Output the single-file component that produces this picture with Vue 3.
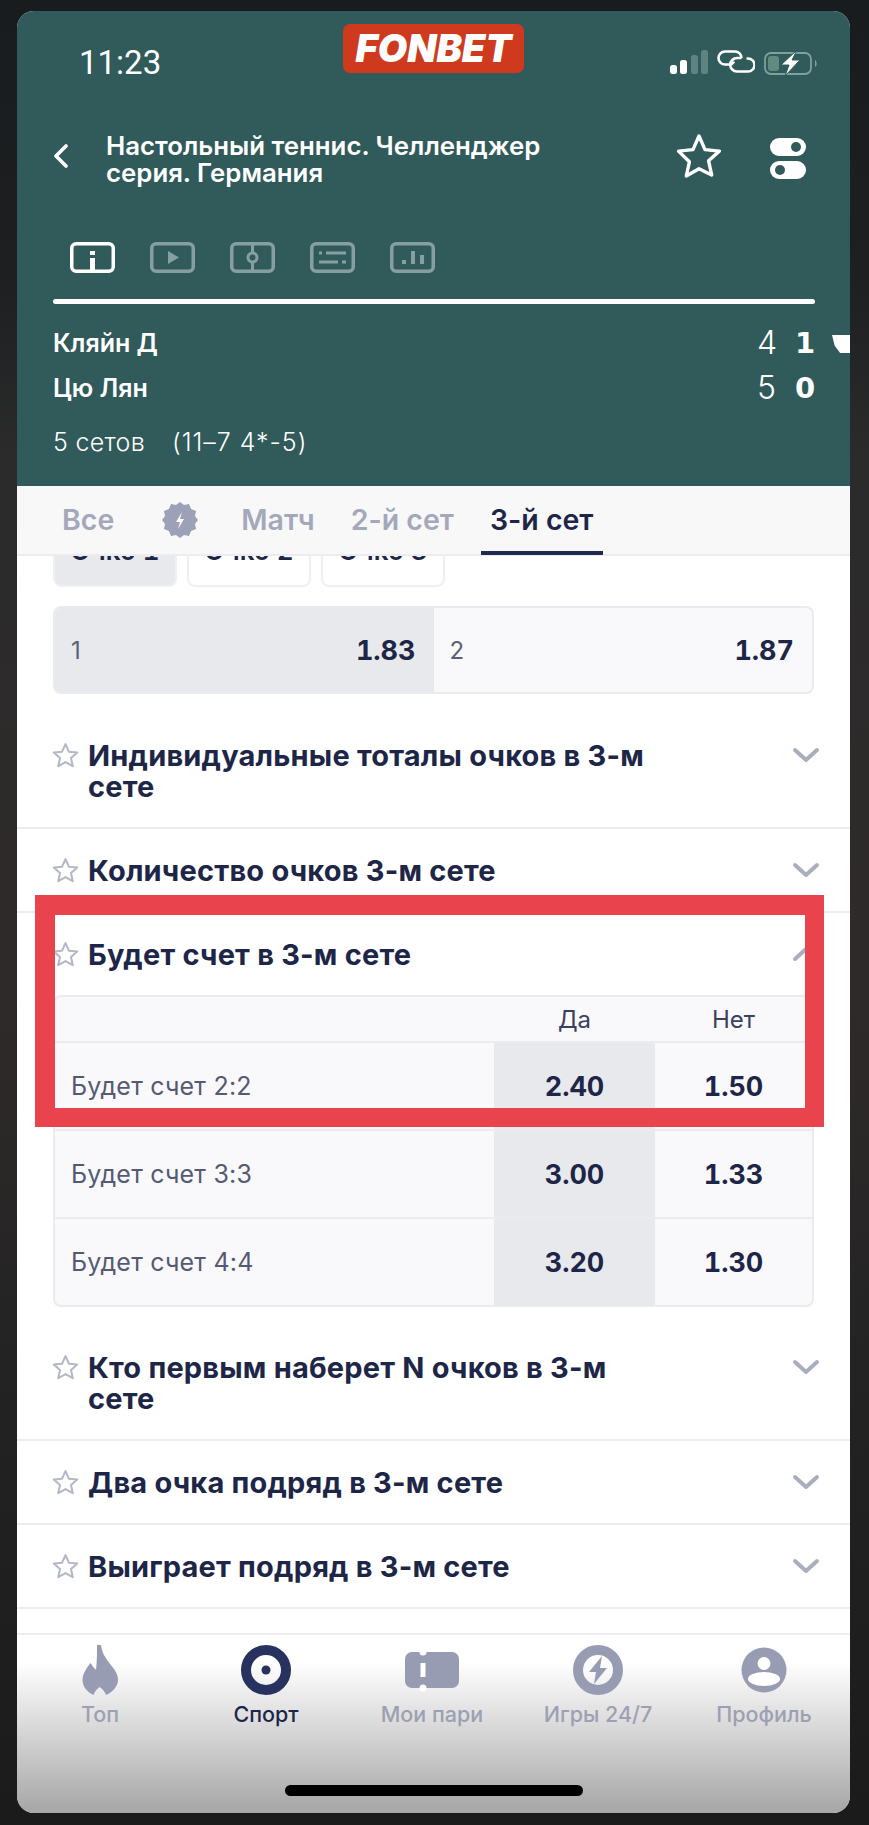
<template>
  <div class="page">
    <div class="phone">
      <header class="hero">
        <div class="status">
          <span class="time">11:23</span>
          <span class="logo">FONBET</span>
          <div class="status-icons">
            <svg width="38" height="24" viewBox="0 0 38 24">
              <rect x="0" y="15" width="7" height="9" rx="2.5" fill="#fff" />
              <rect x="10" y="10" width="7" height="14" rx="2.5" fill="#fff" />
              <rect x="21" y="5" width="7" height="19" rx="2.5" fill="#5f8380" />
              <rect x="31" y="0" width="7" height="24" rx="2.5" fill="#5f8380" />
            </svg>
            <svg width="38" height="23" viewBox="0 0 38 23" fill="none" stroke="#fff" stroke-width="2.6">
              <path d="M14 14.500H8a6.500 6.500 0 0 1 0-13h10a6.500 6.500 0 0 1 6.500 6.500" />
              <path d="M24.500 8H20a6.500 6.500 0 0 0 0 13.500h11a6.500 6.500 0 0 0 0-13h-1.500" />
              <path d="M14 14.500a6.500 6.500 0 0 0 3-3" />
            </svg>
            <svg width="54" height="26" viewBox="0 0 54 26">
              <rect x="1" y="3" width="46" height="21" rx="6" fill="none" stroke="#7fa09d" stroke-width="1.8" />
              <rect x="4" y="6" width="11" height="15" rx="3" fill="#638a80" />
              <path d="M51 10c2 1 2.500 6 0 7z" fill="#7fa09d" />
              <path d="M33 0 17 15h8l-4 11 15-16h-8z" fill="#fff" stroke="#315a5a" stroke-width="1" />
            </svg>
          </div>
        </div>

        <div class="title-row">
          <svg class="back" width="16" height="24" viewBox="0 0 16 24" fill="none" stroke="#fff" stroke-width="3.600" stroke-linecap="round" stroke-linejoin="round">
            <path d="M13 2 3 12l10 10" />
          </svg>
          <h1 class="title">Настольный теннис. Челленджер серия. Германия</h1>
          <svg class="fav" width="46" height="46" viewBox="0 0 46 46" fill="none" stroke="#fff" stroke-width="3.400" stroke-linejoin="round">
            <path d="M23 3l6 13.600 14.500 1.500-10.900 9.700 3.100 14.200L23 35.700 10.300 43l3.100-14.200L2.500 18.100 17 16.600z" />
          </svg>
          <svg class="toggles" width="36" height="41" viewBox="0 0 36 41">
            <rect x="0" y="0" width="36" height="18" rx="9" fill="#fff" />
            <circle cx="26" cy="9" r="5" fill="#315a5a" />
            <rect x="0" y="23" width="36" height="18" rx="9" fill="#fff" />
            <circle cx="10" cy="32" r="5" fill="#315a5a" />
          </svg>
        </div>

        <div class="views">
          <svg v-for="(v, i) in views" :key="v" class="view" :class="{ on: i === 0 }" width="45" height="31" viewBox="0 0 45 31" fill="none" stroke="currentColor" stroke-width="3.500">
            <rect x="1.750" y="1.750" width="41.500" height="27.500" rx="4.500" />
            <template v-if="v === 'info'">
              <rect x="20" y="9" width="5" height="4" fill="currentColor" stroke="none" />
              <rect x="20" y="16" width="5" height="13" fill="currentColor" stroke="none" />
            </template>
            <path v-if="v === 'play'" d="M18 9l11 6.500-11 6.500z" fill="currentColor" stroke="none" />
            <template v-if="v === 'field'">
              <path d="M22.500 2v8M22.500 21v8" stroke-width="3" />
              <circle cx="22.500" cy="15.500" r="4.500" stroke-width="3" />
            </template>
            <template v-if="v === 'score'">
              <path d="M9 11h3M16 11h20M9 20h19M32 20h4" stroke-width="3" />
            </template>
            <template v-if="v === 'stats'">
              <rect x="12" y="18" width="4" height="4" fill="currentColor" stroke="none" />
              <rect x="21" y="9" width="4" height="13" fill="currentColor" stroke="none" />
              <rect x="30" y="13" width="4" height="9" fill="currentColor" stroke="none" />
            </template>
          </svg>
        </div>
        <div class="progress"></div>

        <div class="players">
          <div class="player" v-for="p in players" :key="p.name">
            <span class="pname">{{ p.name }}</span>
            <span class="games">{{ p.games }}</span>
            <span class="sets">{{ p.sets }}</span>
          </div>
        </div>
        <span class="serve"></span>
        <div class="meta"><span>5 сетов</span><span class="sets-score">(11–7 4*-5)</span></div>
      </header>

      <nav class="tabs">
        <span class="tab all">Все</span>
        <svg class="bolt" width="36" height="36" viewBox="0 0 36 36">
          <path d="M18 0l4 3 5-1 2 5 5 2-1 5 3 4-3 4 1 5-5 2-2 5-5-1-4 3-4-3-5 1-2-5-5-2 1-5-3-4 3-4-1-5 5-2 2-5 5 1z" fill="#9ca1b7" />
          <path d="M20 10l-6 10h4l-2 7 6-10h-4z" fill="#fff" />
        </svg>
        <span class="tab">Матч</span>
        <span class="tab">2-й сет</span>
        <span class="tab active">3-й сет</span>
      </nav>

      <main class="content">
        <div class="chips">
          <span class="chip sel">Очко 1</span>
          <span class="chip">Очко 2</span>
          <span class="chip">Очко 3</span>
        </div>

        <div class="winner">
          <div class="cell sel"><span>1</span><b>1.83</b></div>
          <div class="cell"><span>2</span><b>1.87</b></div>
        </div>

        <section v-for="m in markets" :key="m.title" class="market" :class="{ open: m.rows }">
          <div class="m-head">
            <svg class="m-star" width="27" height="27" viewBox="0 0 26 26" fill="#fff" stroke="#b4b8c6" stroke-width="2" stroke-linejoin="round">
              <path d="M13 2l3.300 7.300 8 .9-6 5.300 1.700 7.800L13 19.300l-7 4 1.700-7.800-6-5.300 8-.9z" />
            </svg>
            <h2 class="m-title">{{ m.title }}</h2>
            <svg class="m-chev" width="28" height="16" viewBox="0 0 28 16" fill="none" stroke="#a9aebd" stroke-width="4" stroke-linecap="round" stroke-linejoin="round">
              <path :d="m.rows ? 'M3 13 14 3l11 10' : 'M3 3l11 10L25 3'" />
            </svg>
          </div>
          <div v-if="m.rows" class="table">
            <div class="t-row t-top">
              <span class="t-name"></span>
              <span class="t-col yes-w">Да</span>
              <span class="t-col">Нет</span>
            </div>
            <div v-for="r in m.rows" :key="r.name" class="t-row">
              <span class="t-name">{{ r.name }}</span>
              <b class="t-col yes-w yes">{{ r.yes }}</b>
              <b class="t-col">{{ r.no }}</b>
            </div>
          </div>
        </section>

        <div class="highlight"></div>
      </main>

      <footer class="bottom">
        <div class="nav-item">
          <svg width="36" height="50" viewBox="0 0 36 50" fill="#979cb3">
            <path d="M15 0h4c1 8 4 12 9 19 5 6 8 10 8 16 0 6-5 12-12 15-1-3-3-6-6.500-8-3 2-5 5-6 8-6-3-11-8-11-15 0-6 4-12 8-17 2 3 3.500 5 5.500 7 1-9 1-16 1-25z" />
          </svg>
          <span>Топ</span>
        </div>
        <div class="nav-item active">
          <svg width="50" height="50" viewBox="0 0 50 50">
            <circle cx="25" cy="25" r="20" fill="none" stroke="#27325f" stroke-width="10" />
            <circle cx="25" cy="25" r="4.500" fill="#27325f" />
          </svg>
          <span>Спорт</span>
        </div>
        <div class="nav-item">
          <svg width="54" height="50" viewBox="0 0 54 50">
            <rect x="0" y="7" width="54" height="36" rx="7" fill="#979cb3" />
            <circle cx="18" cy="7" r="3.500" fill="#fff" />
            <circle cx="18" cy="43" r="3.500" fill="#fff" />
            <rect x="15.500" y="18" width="5" height="14" fill="#fff" />
          </svg>
          <span>Мои пари</span>
        </div>
        <div class="nav-item">
          <svg width="50" height="50" viewBox="0 0 50 50">
            <circle cx="25" cy="25" r="20" fill="none" stroke="#979cb3" stroke-width="10" />
            <path d="M29 11 16 27h7l-2 12 13-16h-7z" fill="#979cb3" />
          </svg>
          <span>Игры 24/7</span>
        </div>
        <div class="nav-item">
          <svg width="46" height="50" viewBox="0 0 46 50">
            <circle cx="23" cy="25" r="22.500" fill="#979cb3" />
            <circle cx="23" cy="18.500" r="6.500" fill="#fff" />
            <ellipse cx="23" cy="34" rx="16" ry="7" fill="#fff" />
          </svg>
          <span>Профиль</span>
        </div>
        <div class="home"></div>
      </footer>
    </div>
  </div>
</template>

<script setup>
const views = ['info', 'play', 'field', 'score', 'stats']

const players = [
  { name: 'Кляйн Д', games: 4, sets: 1 },
  { name: 'Цю Лян', games: 5, sets: 0 },
]

const markets = [
  { title: 'Индивидуальные тоталы очков в 3-м сете' },
  { title: 'Количество очков 3-м сете' },
  {
    title: 'Будет счет в 3-м сете',
    rows: [
      { name: 'Будет счет 2:2', yes: '2.40', no: '1.50' },
      { name: 'Будет счет 3:3', yes: '3.00', no: '1.33' },
      { name: 'Будет счет 4:4', yes: '3.20', no: '1.30' },
    ],
  },
  { title: 'Кто первым наберет N очков в 3-м сете' },
  { title: 'Два очка подряд в 3-м сете' },
  { title: 'Выиграет подряд в 3-м сете' },
]
</script>

<style>
body { margin: 0; background: #1b1d1f; }
</style>

<style scoped>
.page {
  width: 869px;
  height: 1825px;
  box-sizing: border-box;
  padding: 11px 19px 12px 17px;
  background: linear-gradient(180deg, #191c1e 0, #1d1f21 15%, #2b2b2b 25%, #2f2a2a 55%, #232323 75%, #1b1b1c 100%);
  font-family: Inter, "Noto Sans", sans-serif;
  overflow: hidden;
}
.phone {
  height: 1802px;
  border-radius: 17px;
  overflow: hidden;
  display: flex;
  flex-direction: column;
  background: #fff;
  position: relative;
}
.hero {
  height: 475px;
  flex: none;
  background: #315a5a;
  color: #fff;
  position: relative;
  box-sizing: border-box;
  padding: 13px 35px 0 36px;
}
.status { display: flex; align-items: flex-start; height: 50px; }
.time { flex: none; font-family: Roboto, sans-serif; font-size: 33px; width: 264px; margin-left: 26px; margin-top: 20px; line-height: 37px; }
.logo {
  flex: none;
  width: 181px;
  height: 49px;
  background: #cf3a1f;
  border-radius: 7px;
  text-align: center;
  font: italic 900 38px/49px Inter, sans-serif;
}
.status-icons { flex: none; display: flex; gap: 9px; margin-left: 146px; margin-top: 26px; align-items: flex-start; }
.title-row { display: flex; align-items: center; margin-top: 51px; height: 62px; }
.back { margin-right: 37px; flex: none; }
.title { flex: none; width: 460px; margin: 6px 0 0; font-size: 25.800px; line-height: 27px; font-weight: 600; }
.fav { margin-left: 110px; margin-right: 48px; flex: none; }
.toggles { flex: none; margin-top: 4px; }
.views { display: flex; gap: 35px; margin-top: 55px; margin-left: 17px; color: #86a0a1; }
.view.on { color: #fff; }
.progress { height: 5px; border-radius: 3px; background: #fff; margin-top: 26px; }
.players { margin-top: 16px; }
.player { display: flex; align-items: center; height: 45px; font-size: 25px; }
.pname { flex: 1; font-weight: 600; }
.games { width: 38px; font-size: 32px; font-weight: 300; }
.sets { width: 20px; font-family: "DejaVu Sans", sans-serif; font-size: 29px; font-weight: 700; text-align: right; }
.serve {
  position: absolute;
  right: 0;
  top: 324px;
  width: 18px;
  height: 18px;
  background: #fff;
  clip-path: polygon(0 0, 100% 0, 100% 100%, 45% 100%, 15% 60%);
}
.meta { display: flex; gap: 27px; margin-top: 17px; font-size: 25px; font-weight: 300; letter-spacing: .3px; }
.sets-score { letter-spacing: 1px; }

.tabs {
  height: 70px;
  flex: none;
  box-sizing: border-box;
  background: #f8f8f9;
  border-bottom: 2px solid #ececef;
  display: flex;
  align-items: center;
  padding-left: 45px;
  position: relative;
  z-index: 1;
}
.tab { font-size: 28.500px; font-weight: 600; color: #a4a8bb; margin-right: 36px; position: relative; line-height: 70px; }
.tab.all { margin-right: 48px; }
.bolt { margin-right: 43px; }
.tab.active { color: #1e2648; }
.tab.active::after {
  content: "";
  position: absolute;
  left: -9px;
  right: -10px;
  bottom: 0;
  height: 4px;
  background: #1f2a52;
}

.content { flex: 1; position: relative; overflow: hidden; min-height: 0; }
.chips { display: flex; gap: 10px; padding: 0 36px; margin-top: -29px; }
.chip {
  width: 124px;
  height: 60px;
  box-sizing: border-box;
  border: 2px solid #eff0f2;
  border-radius: 8px;
  text-align: center;
  font-size: 26px;
  line-height: 44px;
  color: #1e2648;
  font-weight: 600;
  font-variant-numeric: tabular-nums;
}
.chip.sel { background: #e8e9ed; }
.winner {
  margin: 19px 36px 0;
  height: 88px;
  display: flex;
  border: 2px solid #eaebee;
  border-radius: 8px;
  overflow: hidden;
  box-sizing: border-box;
  background: #f9f9fb;
}
.cell { width: 50%; display: flex; align-items: center; justify-content: space-between; padding: 0 18px 0 16px; box-sizing: border-box; font-size: 24px; color: #5a5f78; }
.cell.sel { background: #e8e9ed; }
.cell b { color: #1e2648; font-size: 27px; font-weight: 700; font-variant-numeric: tabular-nums; }
.t-col { color: #1e2648; font-size: 27px; font-weight: 700; font-variant-numeric: tabular-nums; }

.market { border-bottom: 2px solid #eceded; }
.market:first-of-type { margin-top: 20px; }
.market.open { border-bottom: none; }
.m-head { display: flex; align-items: flex-start; padding: 26px 30px 25px 35px; }
.m-star { flex: none; margin-right: 9px; margin-top: 2px; }
.m-title { flex: 1; max-width: 580px; margin: 0 auto 0 0; font-size: 29px; letter-spacing: .2px; line-height: 31px; font-weight: 700; color: #1e2648; }
.m-chev { flex: none; margin-left: auto; margin-top: 7px; }
.table {
  margin: 0 36px 19px;
  border: 2px solid #eaebee;
  border-radius: 8px;
  background: #f9f9fb;
  overflow: hidden;
}
.t-row { display: flex; height: 88px; box-sizing: border-box; border-top: 2px solid #eaebee; align-items: stretch; }
.t-row.t-top { height: 44px; border-top: none; }
.t-name { flex: 1; padding-left: 16px; font-size: 25px; letter-spacing: .2px; color: #555a74; align-self: center; }
.t-col { width: 157px; flex: none; display: flex; align-items: center; justify-content: center; }
.yes-w { width: 161px; }
.t-top .t-col { font-size: 24px; font-weight: 400; color: #3a4060; }
.t-col.yes { background: #e8e9ed; }

.highlight {
  position: absolute;
  left: 18px;
  top: 339px;
  width: 789px;
  height: 232px;
  box-sizing: border-box;
  border: solid #e9434d;
  border-width: 20px 19px 19px 20px;
}

.bottom {
  height: 180px;
  flex: none;
  box-sizing: border-box;
  border-top: 2px solid #eceded;
  background: linear-gradient(180deg, #fff 0, #fff 15%, #a6a6a6 100%);
  display: grid;
  grid-template-columns: repeat(5, 166px);
  padding-top: 10px;
  position: relative;
}
.nav-item { display: flex; flex-direction: column; align-items: center; gap: 6px; font-size: 21.500px; color: #9ca0b2; font-weight: 500; height: 90px; }
.nav-item.active { color: #1e2648; }
.home {
  position: absolute;
  left: 268px;
  bottom: 17px;
  width: 298px;
  height: 11px;
  border-radius: 6px;
  background: #000;
}
</style>
